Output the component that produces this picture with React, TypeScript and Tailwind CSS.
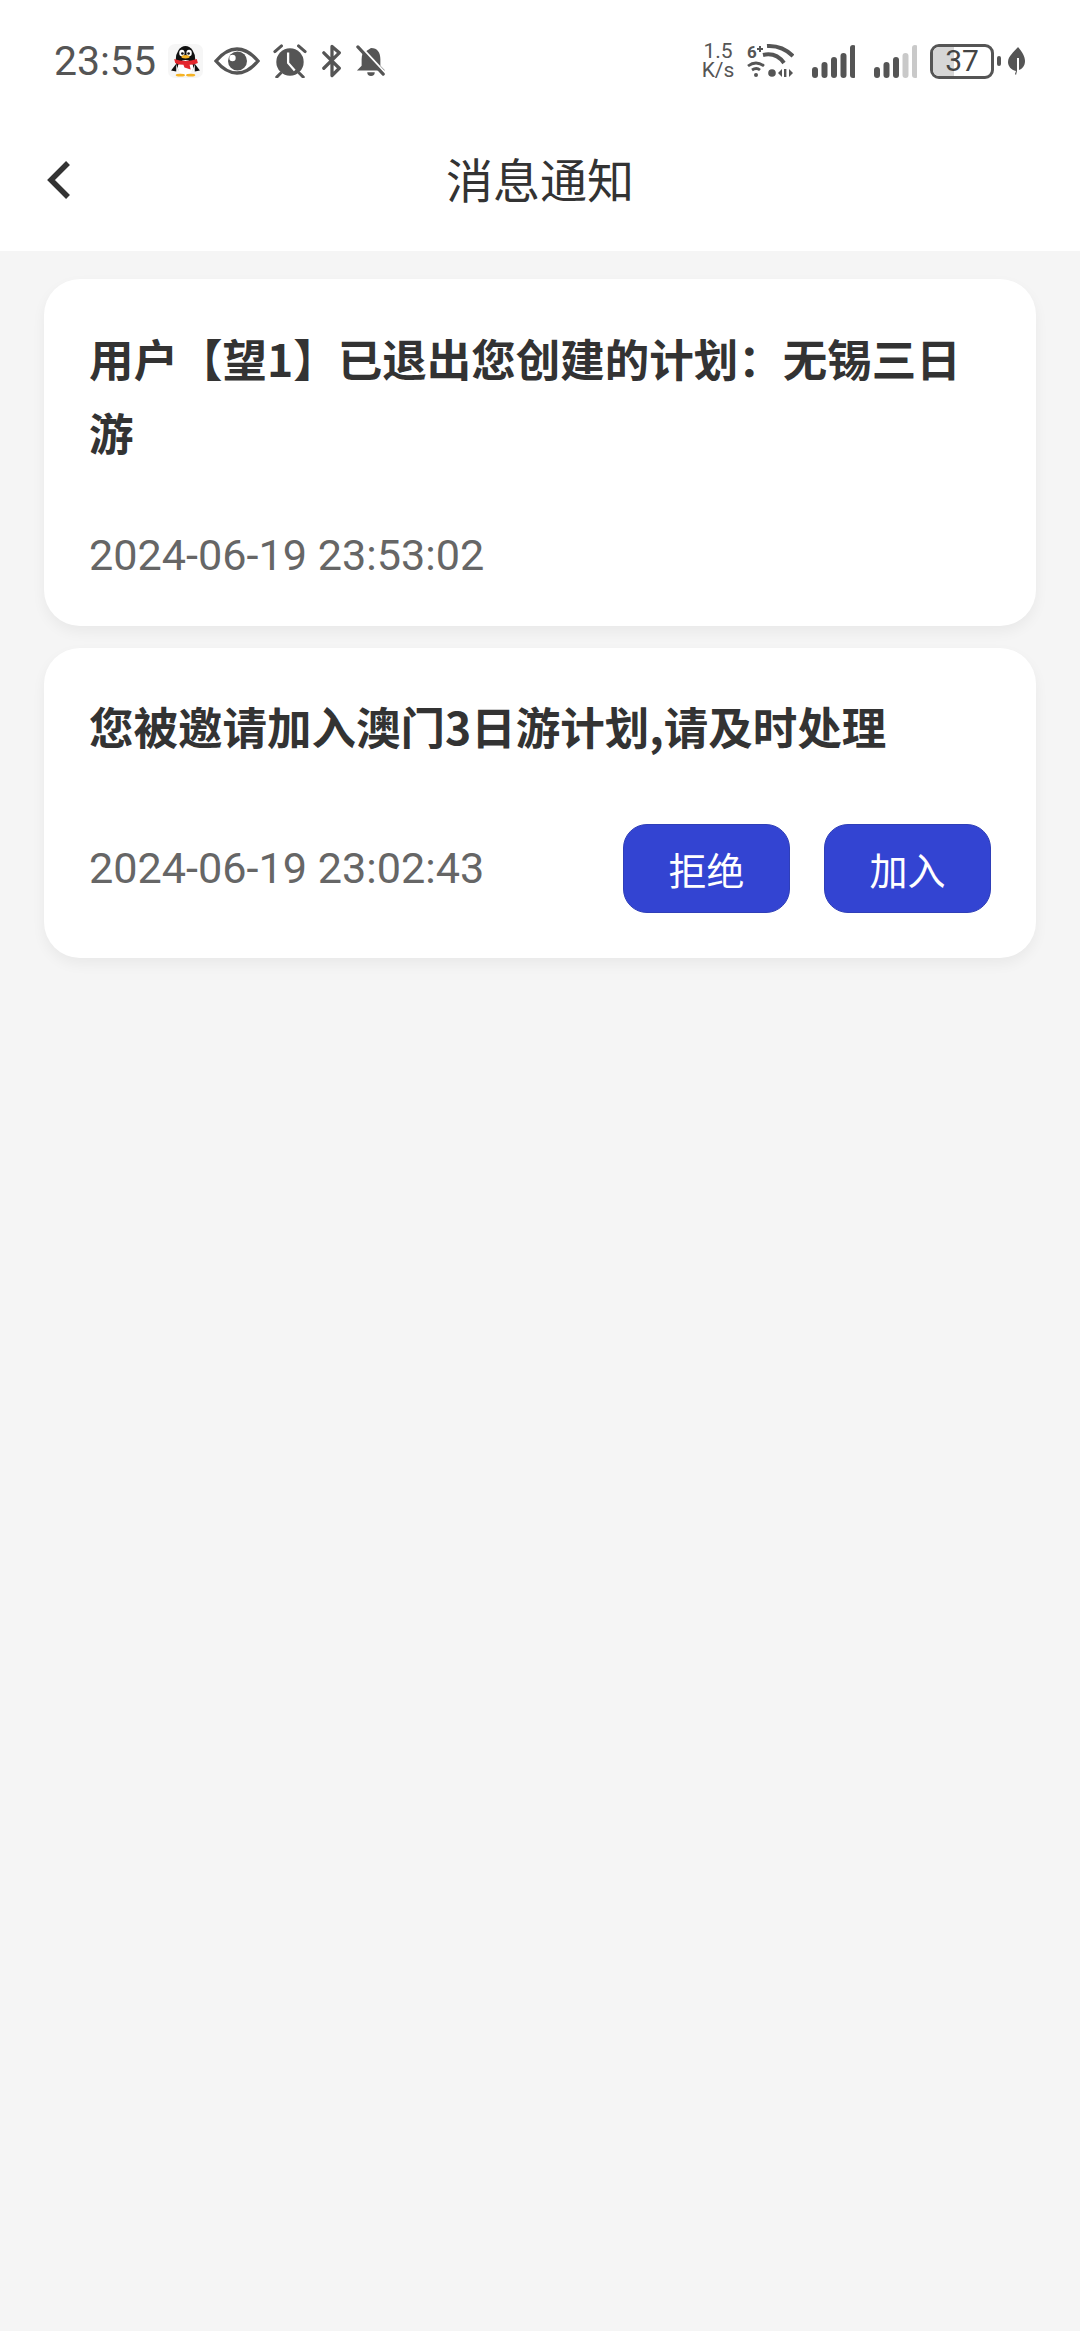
const cjk = "font-['Noto_Sans_CJK_SC',sans-serif]";

function QQ() {
  return (
    <svg width="35" height="34" viewBox="0 0 34 36" preserveAspectRatio="none">
      <rect width="34" height="36" rx="7" fill="#f6f6f6" />
      <ellipse cx="17" cy="17" rx="9.500" ry="15" fill="#111" />
      <ellipse cx="17" cy="25" rx="7.500" ry="8" fill="#fff" />
      <ellipse cx="13.500" cy="9.500" rx="2.600" ry="3.400" fill="#fff" />
      <ellipse cx="20.500" cy="9.500" rx="2.600" ry="3.400" fill="#fff" />
      <circle cx="14" cy="10" r="1.300" fill="#111" />
      <circle cx="20" cy="10" r="1.300" fill="#111" />
      <ellipse cx="17" cy="13.500" rx="4" ry="1.800" fill="#f5b324" />
      <path d="M6 16q11 4 22 0l1 4q-4 2-8 2l1 5-6-2-1-3q-5 0-8-2z" fill="#e3262c" />
      <path d="M8 21l-5 7 5 1zM26 21l5 7-5 1z" fill="#111" />
      <ellipse cx="12" cy="33" rx="4.500" ry="1.400" fill="#f5b324" />
      <ellipse cx="22" cy="33" rx="4.500" ry="1.400" fill="#f5b324" />
    </svg>
  );
}

function Eye() {
  return (
    <svg width="46" height="28" viewBox="0 0 46 28">
      <path d="M2 14Q12 2 23 2t21 12Q34 26 23 26T2 14z" fill="none" stroke="#555" strokeWidth="3.400" />
      <circle cx="23.500" cy="14" r="9.500" fill="#555" />
      <circle cx="18.500" cy="11" r="3.200" fill="#fff" />
    </svg>
  );
}

function Alarm() {
  return (
    <svg width="34" height="34" viewBox="0 0 36 36">
      <circle cx="18" cy="19" r="14.500" fill="#555" />
      <path d="M16 9v11l7 8" fill="none" stroke="#fff" strokeWidth="2.400" />
      <path d="M2 8l7-6M34 8l-7-6M8 31l-4 4M28 31l4 4" stroke="#555" strokeWidth="3.200" strokeLinecap="round" />
    </svg>
  );
}

function Bluetooth() {
  return (
    <svg width="20" height="34" viewBox="0 0 22 36">
      <path d="M2 9l17 17-8 8V2l8 7L2 26" fill="none" stroke="#555" strokeWidth="3.600" strokeLinecap="round" strokeLinejoin="round" />
    </svg>
  );
}

function BellOff() {
  return (
    <svg width="30" height="32" viewBox="0 0 32 34">
      <path d="M16 3c7 0 10 5 10 12v7l5 5H1l5-5v-7c0-2 .4-4 1-6z" fill="#555" />
      <path d="M12 29h8a4 4 0 0 1-8 0z" fill="#555" />
      <path d="M4 1l27 29" stroke="#fff" strokeWidth="3" />
      <path d="M2 2l27 29" stroke="#555" strokeWidth="3.400" strokeLinecap="round" />
    </svg>
  );
}

function Wifi() {
  return (
    <svg width="47" height="36" viewBox="0 0 47 36">
      <text x="0" y="15" fontSize="17" fontWeight="700" fill="#555" fontFamily="Roboto, sans-serif">6</text>
      <path d="M10 6h6M13 3v6" stroke="#555" strokeWidth="2" />
      <path d="M20 3q15-1 26 10" fill="none" stroke="#555" strokeWidth="4" />
      <path d="M16 12q13-3 21 8" fill="none" stroke="#555" strokeWidth="4" />
      <path d="M1 23q8-6 16 0M5 27q4.500-3 8 0" fill="none" stroke="#555" strokeWidth="2.800" />
      <circle cx="9" cy="32" r="2" fill="#555" />
      <circle cx="25" cy="30" r="3.800" fill="#555" />
      <path d="M31 30l4-4v8zM42 26l4 4-4 4zM37 26h2.400v8H37z" fill="#555" />
    </svg>
  );
}

function Signal({ weak }: { weak?: boolean }) {
  const heights = [11, 16, 21, 25, 33];
  return (
    <svg width="43" height="34" viewBox="0 0 43 34">
      {heights.map((h, i) => (
        <rect
          key={i}
          x={i * 9.500}
          y={34 - h}
          width="6"
          height={h}
          rx="3"
          fill={weak && i > 2 ? "#c9c9c9" : "#555"}
        />
      ))}
    </svg>
  );
}

function Leaf() {
  return (
    <svg width="17" height="28" viewBox="0 0 17 28">
      <path d="M10 0c4 5 7 9 7 14 0 5-3 8-6 9V11H9v13l-1 4-1-1 1-3C3 23 0 19 0 15 0 9 6 5 10 0z" fill="#555" />
    </svg>
  );
}

function StatusBar() {
  return (
    <div className="h-[122px] flex items-center justify-between pl-[54px] pr-[55px]">
      <div className="flex items-center">
        <span className="font-['Roboto',sans-serif] text-[41px] leading-none text-[#555] w-[114px]">23:55</span>
        <QQ />
        <span className="ml-[11px]"><Eye /></span>
        <span className="ml-[13px]"><Alarm /></span>
        <span className="ml-[15px]"><Bluetooth /></span>
        <span className="ml-[14px]"><BellOff /></span>
      </div>
      <div className="flex items-center">
        <div className="w-[36px] flex flex-col items-center font-['Roboto',sans-serif] text-[#555] text-[21px] leading-[19px]">
          <span>1.5</span>
          <span>K/s</span>
        </div>
        <span className="ml-[11px]"><Wifi /></span>
        <span className="ml-[18px]"><Signal /></span>
        <span className="ml-[19px]"><Signal weak /></span>
        <div className="ml-[13px] w-[64px] h-[35px] rounded-[9px] border-[3px] border-[#555] overflow-hidden relative flex items-center justify-center">
          <div className="absolute left-0 top-0 bottom-0 w-[37%] bg-[#d6d6d6]" />
          <span className="relative font-['Roboto',sans-serif] text-[30px] leading-none text-[#444]">37</span>
        </div>
        <div className="ml-[3px] mr-[7px] w-[4px] h-[10px] rounded-[2px] bg-[#555]" />
        <Leaf />
      </div>
    </div>
  );
}

function Card({ title, time, actions }: { title: string; time: string; actions?: boolean }) {
  return (
    <div className={`bg-white rounded-[36px] shadow-[0_6px_14px_rgba(0,0,0,0.05)] pl-[45px] pr-[45px] pb-[45px] ${actions ? "pt-[41px]" : "pt-[42px]"}`}>
      <div className={`${cjk} text-[44.5px] leading-[74px] font-semibold text-[#333]`}>{title}</div>
      <div className={`flex items-center justify-between ${actions ? "mt-[61px]" : "mt-[62px]"}`}>
        <span className="font-['Roboto',sans-serif] text-[43.2px] leading-[50px] text-[#666]">{time}</span>
        {actions && (
          <div className="flex gap-[34px] h-[89px]">
            <button className={`${cjk} w-[167px] rounded-[24px] bg-[#3344d2] border border-[#2f3fb8] text-white text-[38px]`}>拒绝</button>
            <button className={`${cjk} w-[167px] rounded-[24px] bg-[#3344d2] border border-[#2f3fb8] text-white text-[38px]`}>加入</button>
          </div>
        )}
      </div>
    </div>
  );
}

export default function App() {
  return (
    <div className="w-[1080px] h-[2331px] bg-[#f5f5f5] flex flex-col">
      <div className="bg-white h-[251px]">
        <StatusBar />
        <div className="relative h-[116px] flex items-center justify-center pb-[6px]">
          <svg className="absolute left-[44px] top-1/2 -translate-y-1/2" width="28" height="40" viewBox="0 0 28 40">
            <path d="M24 3L7 20l17 17" fill="none" stroke="#333" strokeWidth="5.500" />
          </svg>
          <span className={`${cjk} text-[47px] leading-none text-[#333]`}>消息通知</span>
        </div>
      </div>
      <div className="px-[44px] pt-[28px] flex flex-col gap-[22px]">
        <Card title="用户【望1】已退出您创建的计划：无锡三日游" time="2024-06-19 23:53:02" />
        <Card title="您被邀请加入澳门3日游计划,请及时处理" time="2024-06-19 23:02:43" actions />
      </div>
    </div>
  );
}
